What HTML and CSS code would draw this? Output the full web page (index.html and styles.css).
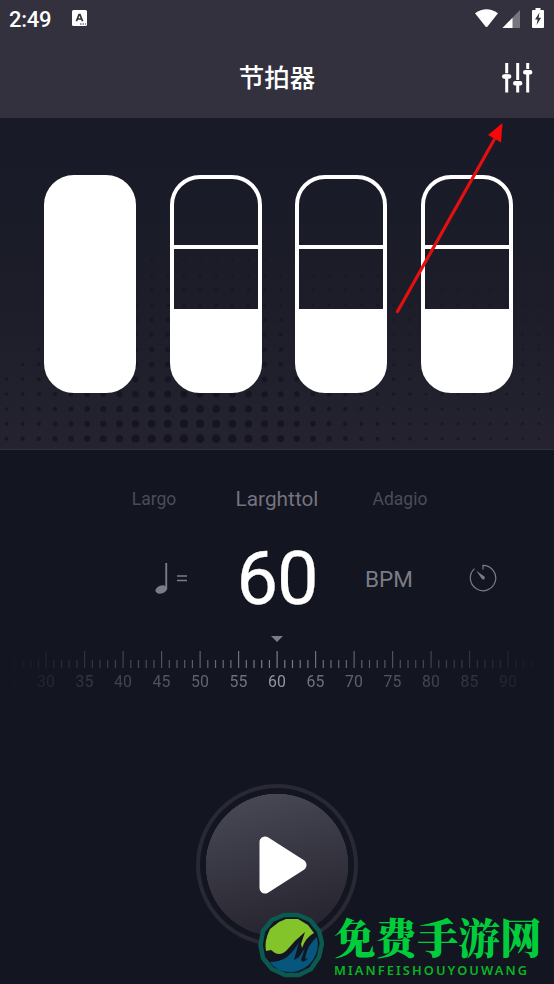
FILE: index.html
```html
<!DOCTYPE html>
<html lang="zh-CN">
<head>
    <meta charset="UTF-8">
    <meta name="viewport" content="width=device-width, initial-scale=1.0">
    <title>节拍器</title>
    <link rel="stylesheet" href="styles.css">
</head>
<body>
    <!-- Header -->
    <header class="header">
        <div class="status-bar">
            <span class="time">2:49</span>
            <svg class="app-icon" width="15" height="16" viewBox="0 0 15 16">
                <rect width="15" height="16" rx="1.5" fill="#fff"/>
                <path d="M4.4 11.2 7 4.6h1l2.6 6.6M5.4 9h4.2" fill="none" stroke="#32313d" stroke-width="1.7"/>
                <path d="M8 14h1.5M10.5 14H12M13 14h1" stroke="#32313d"/>
            </svg>
            <svg class="status-icons" width="72" height="22" viewBox="0 0 72 22">
                <path d="M1 5.2Q12.500-2.600 24 5.200L13.500 18.400Q12.500 19.400 11.500 18.400Z" fill="#fff"/>
                <path d="M46 2v18H28.500Z" fill="#77767f"/>
                <path d="M38.500 9.800V20H28.500Z" fill="#fff"/>
                <path d="M59 2h2.500V0h5v2H69q1 0 1 1v16q0 1-1 1H59q-1 0-1-1V3q0-1 1-1Z" fill="#fff"/>
                <path d="M65.500 4.500 61 11.500h2.600l-1 5.500 4.500-7.200h-2.500Z" fill="#32313d"/>
            </svg>
        </div>
        <div class="title-bar">
            <h1>节拍器</h1>
            <svg class="settings" width="31" height="31" viewBox="0 0 31 31" stroke="#fff" stroke-width="3">
                <path d="M4.700 0v29.500M15.700 0v29.500M25.700 0v29.500"/>
                <path d="M2 10.800h5.400M13 17.600h5.400M23 6.600h5.400" stroke="#32313d" stroke-width="1.200"/>
                <path d="M2.200 13.500h5M13.200 20.300h5M23.200 9.300h5" stroke-width="4.400" stroke-linecap="round"/>
            </svg>
        </div>
    </header>

    <!-- Beats -->
    <section class="stage">
        <svg class="dots" id="dots" width="554" height="331"></svg>
        <div class="beats">
            <div class="beat full"></div>
            <div class="beat"></div>
            <div class="beat"></div>
            <div class="beat"></div>
        </div>
    </section>

    <!-- Tempo -->
    <section class="tempo">
        <div class="tempo-names">
            <span>Largo</span>
            <span class="current">Larghttol</span>
            <span>Adagio</span>
        </div>
        <div class="tempo-value">
            <div class="note">
                <svg width="14" height="33" viewBox="0 0 14 33" fill="#7b7c86">
                    <path d="M10.300 1H12.200v26h-1.900Z"/>
                    <ellipse cx="6.300" cy="27.500" rx="6" ry="3.900" transform="rotate(-18 6.300 27.500)"/>
                </svg>
                <svg width="10" height="9" viewBox="0 0 10 9" stroke="#7b7c86" stroke-width="1.300">
                    <path d="M0 2h10M0 6.500h10"/>
                </svg>
            </div>
            <strong>60</strong>
            <span class="unit">BPM</span>
            <svg class="timer" width="28" height="28" viewBox="0 0 28 28">
                <path d="M14 5.500V1.300A12.700 12.700 0 1 1 5.500 4.600" fill="none" stroke="#7b7c86" stroke-width="1.200"/>
                <path d="M7.200 6.800 15.400 12.500A1.500 1.500 0 0 1 13 14.900Z" fill="#7b7c86"/>
            </svg>
        </div>
        <div class="pointer"></div>
        <div class="ruler">
            <svg id="ticks" width="554" height="18"></svg>
            <div class="labels" id="labels"></div>
        </div>
    </section>

    <!-- Play -->
    <div class="player">
        <button class="play" aria-label="Play">
            <svg width="50" height="60" viewBox="0 0 50 60">
                <path d="M7 7v46L43 30Z" fill="#fff" stroke="#fff" stroke-width="11" stroke-linejoin="round"/>
            </svg>
        </button>
    </div>

    <!-- Arrow to the settings button -->
    <svg class="arrow" width="112" height="196" viewBox="0 0 112 196">
        <path d="M3.500 188.500 100 17" stroke="#e41010" stroke-width="3.200" stroke-linecap="round"/>
        <path d="M108.500 0 94 12 107 19.500Z" fill="#f80808"/>
    </svg>

    <div class="watermark">
        <svg width="66" height="66" viewBox="0 0 66 66">
            <path d="M26 3H40L52 8 61 19 64 31 61 45 53 57 41 63H27L14 57 5 46 2.500 33 5 19 14 8Z" fill="#131520" stroke="#0b5a51" stroke-width="4.500" stroke-linejoin="round"/>
            <path d="M8 39Q6 29 12 17L21 10 28 7H40L50 13 56 21Q48 25 44 36L43 32 47 20Q37 28 29 38 23 44 17 41L13 38Z" fill="#82c42a"/>
            <path d="M59 25Q62 37 55 48 48 58 35 60 19 61 12 50 22 50 29 45 37 38 41 30L36 48 41 45 47 36 43 48Q45 52 50 46L47 47Q49 33 59 25Z" fill="#07567d"/>
        </svg>
        <div class="brand">
            <p>免费手游网</p>
            <small>MIANFEISHOUYOUWANG</small>
        </div>
    </div>

    <script>
        const NS = 'http://www.w3.org/2000/svg';

        function add(parent, name, attrs) {
            const el = document.createElementNS(NS, name);
            for (const key in attrs) {
                el.setAttribute(key, attrs[key]);
            }
            parent.appendChild(el);
        }

        // Halftone dots, biggest at the bottom left of the centre
        const dots = document.getElementById('dots');
        for (let row = 0; row < 13; row++) {
            for (let col = 0; col < 34; col++) {
                const x = 6.5 + col * 16.13;
                const dist = Math.exp(-Math.pow((x - 195) / 150, 2));
                const rise = 1 - row / 13;
                const limit = x < 150 ? 4 + x / 17 : 13 - (x - 150) / 120;
                if (row >= limit || x > 545) continue;
                add(dots, 'circle', {
                    cx: x,
                    cy: 320.7 - row * 14.85,
                    r: 1.3 + dist * 3 * Math.pow(rise, 1.3),
                    opacity: Math.min(1, 0.4 + 0.75 * rise) * (0.7 + 0.3 * dist)
                });
            }
        }

        // Ruler ticks and labels
        const ticks = document.getElementById('ticks');
        for (let bpm = 25; bpm <= 95; bpm++) {
            const major = bpm % 5 === 0;
            add(ticks, 'rect', {
                x: 276.5 + (bpm - 60) * 7.7,
                y: major ? 0 : 9,
                width: 1.2,
                height: major ? 17 : 8
            });
        }
        const labels = document.getElementById('labels');
        for (let bpm = 25; bpm <= 95; bpm += 5) {
            const label = document.createElement('span');
            label.textContent = bpm;
            if (bpm === 60) label.className = 'active';
            labels.appendChild(label);
        }
    </script>
</body>
</html>
```

FILE: styles.css
```css
* {
    box-sizing: border-box;
}

body {
    margin: 0;
    height: 984px;
    overflow: hidden;
    position: relative;
    background: #131520;
    color: #7b7c86;
    font-family: Roboto, "Noto Sans CJK SC", sans-serif;
}

svg {
    display: block;
}

h1, p {
    margin: 0;
}

/* Header */
.header {
    height: 118px;
    background: #32313d;
    color: #fff;
}

.status-bar {
    display: flex;
    align-items: center;
    height: 38px;
    padding: 0 8px 0 9px;
}

.time {
    width: 63px;
    font-size: 22px;
    font-weight: 500;
    letter-spacing: -0.3px;
}

.app-icon {
    margin-bottom: 2px;
}

.status-icons {
    margin-left: auto;
}

.title-bar {
    display: grid;
    grid-template-columns: 1fr auto 1fr;
    align-items: center;
    height: 80px;
    padding: 0 21px;
}

.title-bar h1 {
    grid-column: 2;
    font-size: 25.5px;
    font-weight: 500;
    line-height: 36px;
}

.settings {
    justify-self: end;
}

/* Beats */
.stage {
    display: grid;
    height: 332px;
    background: linear-gradient(#181a27, #1c1d29 55%, #24232f);
    border-bottom: 1px solid #30313c;
}

.dots,
.beats {
    grid-area: 1 / 1;
}

.dots {
    fill: #131520;
}

.beats {
    display: flex;
    justify-content: space-between;
    padding: 57px 41px 0 44px;
}

/* Middle line and bottom third are painted behind the outline */
.beat {
    width: 92.400px;
    height: 218px;
    border: 4px solid #fff;
    border-radius: 30px;
    background: linear-gradient(transparent 70px, #fff 70px, #fff 74px, transparent 74px, transparent 134px, #fff 134px) border-box;
}

.beat.full {
    background: #fff;
}

/* Tempo */
.tempo {
    height: 334px;
    padding-top: 34px;
}

.tempo-names {
    display: grid;
    grid-template-columns: 123px 123px 123px;
    justify-content: center;
    align-items: center;
    height: 30px;
    text-align: center;
    font-size: 17.500px;
    color: #4b4c57;
}

.tempo-names .current {
    font-size: 20.800px;
    color: #73747f;
}

.tempo-value {
    display: grid;
    grid-template-columns: 215px 124px 100px 1fr;
    align-items: center;
    height: 128px;
}

.note {
    display: flex;
    align-items: center;
    gap: 8px;
    padding-left: 155px;
}

.tempo-value strong {
    color: #fff;
    font-size: 74px;
    font-weight: 400;
    letter-spacing: -1px;
    text-align: center;
    -webkit-text-stroke: 0.3px #fff;
}

.unit {
    text-align: center;
    font-size: 22.500px;
    padding-top: 2px;
}

.timer {
    margin-left: 30px;
}

.pointer {
    width: 12px;
    height: 6px;
    margin: -6px auto 9px;
    background: #7b7c86;
    clip-path: polygon(0 0, 100% 0, 50% 100%);
}

.ruler {
    -webkit-mask-image: linear-gradient(90deg, transparent 1%, #000 48%, #000 52%, transparent 99%);
    mask-image: linear-gradient(90deg, transparent 1%, #000 48%, #000 52%, transparent 99%);
}

#ticks {
    fill: #7b7c86;
}

.labels {
    display: flex;
    justify-content: center;
    margin-top: 3px;
    font-size: 15.800px;
    line-height: 20px;
}

.labels span {
    flex: 0 0 38.500px;
    text-align: center;
}

.labels .active {
    color: #94959e;
}

/* Play */
.player {
    display: flex;
    justify-content: center;
}

.play {
    display: flex;
    align-items: center;
    justify-content: center;
    width: 162px;
    height: 162px;
    padding: 0 0 0 12px;
    border: 4px solid #282933;
    border-radius: 50%;
    background: radial-gradient(circle, transparent 71px, #131520 71.500px), linear-gradient(165deg, #484955 8%, #24222d 90%);
}

/* Overlays */
.arrow {
    position: absolute;
    left: 394px;
    top: 123px;
}

.watermark {
    position: absolute;
    left: 258px;
    top: 912px;
    display: flex;
    gap: 10px;
}

.brand p {
    color: #00cc3c;
    font-family: "Noto Serif CJK SC", "Noto Sans CJK SC", serif;
    font-size: 41.500px;
    font-weight: 900;
    line-height: 50px;
    margin-top: -1px;
}

.brand small {
    display: block;
    color: #09b424;
    font-family: "Noto Sans", sans-serif;
    font-size: 12.800px;
    font-weight: 600;
    line-height: 14px;
    letter-spacing: 2.100px;
    margin-top: 2px;
}
```
